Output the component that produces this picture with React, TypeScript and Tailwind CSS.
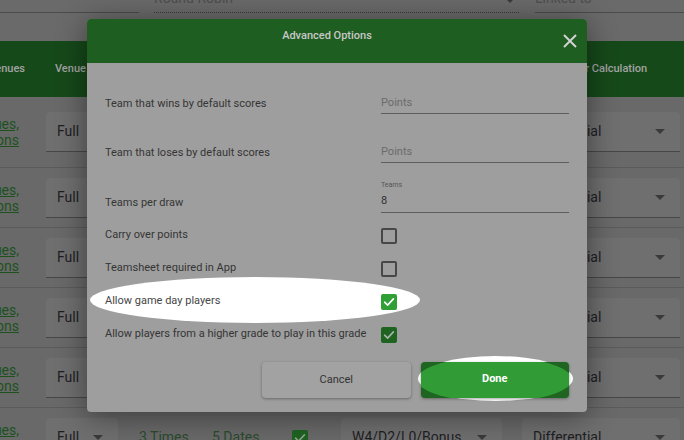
import type { ReactNode } from "react";

function Caret({ className = "fill-[#3a3a3a]" }: { className?: string }) {
  return (
    <svg width="10" height="5" viewBox="0 0 10 5" className={className} aria-hidden="true">
      <path d="M0 0 L10 0 L5 5 Z" />
    </svg>
  );
}

function Check({ stroke }: { stroke: string }) {
  return (
    <svg width="16" height="16" viewBox="0 0 16 16" aria-hidden="true">
      <path d="M3.6 8.2 L6.6 11.1 L12.4 4.9" fill="none" stroke={stroke} strokeWidth="1.6" strokeLinecap="round" strokeLinejoin="round" />
    </svg>
  );
}

function FilledSelect({ width, children }: { width: string; children: ReactNode }) {
  return (
    <div
      className={`ml-[10px] flex h-[40px] items-center justify-between rounded-t-[4px] border-b border-[#474747] bg-[#6f6f6f] pl-[11px] pr-[15px] text-[14px] text-[#1e1e24] ${width}`}
    >
      <span className="whitespace-nowrap">{children}</span>
      <Caret />
    </div>
  );
}

function TableRow({ tall }: { tall?: boolean }) {
  return (
    <div
      className={`grid grid-cols-[36px_92px_74px_80px_49px_181px_1fr] items-center border-b border-[#5b5b5b] bg-[#696969] ${
        tall ? "h-[71px]" : "h-[60px]"
      }`}
    >
      <div className="flex flex-col items-end overflow-hidden whitespace-nowrap pr-[17px] text-[14px] leading-[16px] text-[#1d521f] underline">
        <span>Venues,</span>
        <span>Locations</span>
      </div>
      <FilledSelect width="w-[72px]">Full</FilledSelect>
      <div className="pl-[11px] text-[14px] text-[#2b4a2d] whitespace-nowrap">3 Times</div>
      <div className="pl-[10px] text-[14px] text-[#2b4a2d] whitespace-nowrap">5 Dates</div>
      <div className="pl-[10px]">
        <div className="flex h-[16px] w-[16px] items-center justify-center rounded-[2px] bg-[#1f6321]">
          <Check stroke="#8fa58f" />
        </div>
      </div>
      <FilledSelect width="w-[161px]">W4/D2/L0/Bonus</FilledSelect>
      <FilledSelect width="w-[158px]">Differential</FilledSelect>
    </div>
  );
}

function Box({ checked, bright }: { checked?: boolean; bright?: boolean }) {
  if (!checked) {
    return <div className="h-[16px] w-[16px] rounded-[2px] border-2 border-[#474747]" />;
  }
  return (
    <div
      className={`flex h-[16px] w-[16px] items-center justify-center rounded-[2px] ${
        bright ? "bg-[#30a036]" : "bg-[#1f6321]"
      }`}
    >
      <Check stroke={bright ? "#ffffff" : "#a9b4a9"} />
    </div>
  );
}

function CheckRow({ label, checked, bright }: { label: string; checked?: boolean; bright?: boolean }) {
  return (
    <div className="flex h-[33px] items-center">
      <div className={`w-[276px] text-[11px] ${bright ? "text-[#454545]" : "text-[#353535]"}`}>{label}</div>
      <Box checked={checked} bright={bright} />
    </div>
  );
}

export default function App() {
  return (
    <div className="relative h-[440px] w-[684px] overflow-hidden bg-[#6a6a6a] font-[Roboto,sans-serif]">
      {/* page behind the dialog */}
      <div className="flex h-[41px] items-start">
        <div className="h-[13px] w-[139px] border-b border-[#4b4b4b]" />
        <div className="ml-[15px] flex h-[13px] w-[365px] items-start justify-between border-b border-dotted border-[#3c3c3c] pr-[4px]">
          <span className="-mt-[10px] text-[14px] leading-[16px] text-[#4e4e4e]">Round Robin</span>
          <span className="-mt-[2px]">
            <Caret />
          </span>
        </div>
        <div className="ml-[16px] h-[13px] flex-1 border-b border-[#4b4b4b]">
          <span className="-mt-[10px] block text-[14px] leading-[16px] text-[#4e4e4e]">Linked to</span>
        </div>
      </div>

      <div className="grid h-[56px] grid-cols-[36px_92px_74px_80px_49px_181px_1fr] items-center bg-[#16491a] text-[11px] font-medium text-[#a3a3a3]">
        <div className="flex justify-end overflow-hidden whitespace-nowrap pr-[11px]">
          <span>Venues</span>
        </div>
        <div className="pl-[19px] whitespace-nowrap">Venue Allocation</div>
        <div className="pl-[11px]">Times</div>
        <div className="pl-[10px]">Dates</div>
        <div className="pl-[10px]">Bye</div>
        <div className="pl-[21px]">Points</div>
        <div className="pl-[21px] whitespace-nowrap">Tie Breaker Calculation</div>
      </div>

      <TableRow tall />
      <TableRow />
      <TableRow />
      <TableRow />
      <TableRow />
      <TableRow />

      {/* dialog */}
      <div className="absolute left-[87px] top-[19px] h-[393px] w-[500px] overflow-hidden rounded-[4px] bg-[#9e9e9e] shadow-[0_4px_30px_rgba(0,0,0,0.45)]">
        <div className="flex h-[44px] bg-[#1e5e20]">
          <div className="flex-1 pt-[10px] pl-[4px] text-center text-[11px] font-medium leading-[13px] text-[#c8c8c8]">
            Advanced Options
          </div>
          <div className="flex w-[24px] items-center pr-[10px]">
            <svg width="14" height="14" viewBox="0 0 14 14" aria-hidden="true">
              <path d="M1 1 L13 13 M13 1 L1 13" stroke="#d2d2d2" strokeWidth="2" />
            </svg>
          </div>
        </div>

        {/* highlight marks */}
        <div className="absolute left-[3px] top-[258px] h-[46px] w-[330px] rounded-[50%] bg-white" />
        <div className="absolute left-[331px] top-[337px] h-[45px] w-[155px] rounded-[50%] bg-white" />

        <div className="relative px-[18px] pt-[26px]">
          <div className="flex h-[30px] items-center">
            <div className="w-[276px] text-[11px] text-[#353535]">Team that wins by default scores</div>
            <div className="flex h-[20px] w-[188px] items-center border-b border-[#5e5e5e] text-[11px] text-[#6b6b6b]">
              Points
            </div>
          </div>
          <div className="mt-[19px] flex h-[30px] items-center">
            <div className="w-[276px] text-[11px] text-[#353535]">Team that loses by default scores</div>
            <div className="flex h-[20px] w-[188px] items-center border-b border-[#5e5e5e] text-[11px] text-[#6b6b6b]">
              Points
            </div>
          </div>
          <div className="mt-[20px] flex h-[30px] items-center">
            <div className="w-[276px] text-[11px] text-[#353535]">Teams per draw</div>
            <div className="relative flex h-[20px] w-[188px] items-center border-b border-[#5e5e5e] pb-[3px] text-[11px] text-[#333]">
              <span className="absolute -top-[12px] left-0 text-[7px] leading-[8px] text-[#555]">Teams</span>
              8
            </div>
          </div>
          <div className="mt-[1px]">
            <CheckRow label="Carry over points" />
            <CheckRow label="Teamsheet required in App" />
            <CheckRow label="Allow game day players" checked bright />
            <CheckRow label="Allow players from a higher grade to play in this grade" checked />
          </div>

          <div className="ml-[157px] mt-[11px] flex gap-[10px]">
            <button className="h-[36px] w-[150px] rounded-[4px] bg-[#a2a2a2] text-[11px] text-[#333] shadow-[0_1px_3px_rgba(0,0,0,0.35)]">
              Cancel
            </button>
            <button className="relative h-[36px] w-[150px] overflow-hidden rounded-[4px] bg-[#1f6421] text-[11px] font-bold text-white shadow-[0_1px_3px_rgba(0,0,0,0.35)]">
              <span className="absolute -left-[4px] -top-[5px] h-[45px] w-[155px] rounded-[50%] bg-[#319c35]" />
              <span className="relative -top-[1px]">Done</span>
            </button>
          </div>
        </div>
      </div>
    </div>
  );
}
